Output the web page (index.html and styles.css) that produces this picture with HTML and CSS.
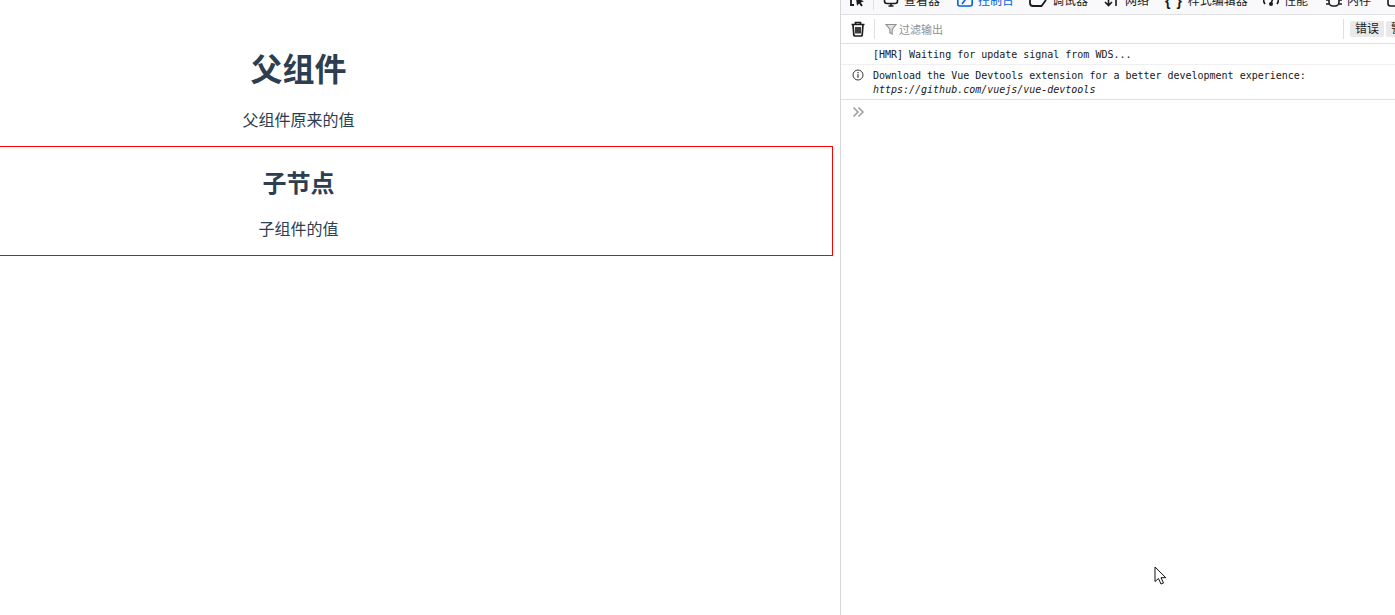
FILE: index.html
```html
<!DOCTYPE html>
<html lang="zh">
<head>
<meta charset="utf-8">
<title>Vue</title>
<link rel="stylesheet" href="styles.css">
</head>
<body>
<div class="layout">
  <main class="page">
    <div class="app">
      <h1 class="title">父组件</h1>
      <p class="text parent-text">父组件原来的值</p>
      <section class="child">
        <h2 class="subtitle">子节点</h2>
        <p class="text child-text">子组件的值</p>
      </section>
    </div>
  </main>
  <aside class="devtools">
    <nav class="tabs">
      <svg class="tab-icon pick" viewBox="0 0 16 16" width="16" height="16"><path d="M2 5v8h3M2 5h8" fill="none" stroke="#1b1b1d" stroke-width="1.800"/><path d="M7 6l8 3.200-3.200 1.200 2 3-1.600 1.100-2-3-2.200 2.200z" fill="#1b1b1d"/></svg>
      <span class="sep"></span>
      <span class="tab t1"><svg class="tab-icon" viewBox="0 0 16 16" width="16" height="16"><rect x="1.500" y="0" width="13" height="11.500" rx="2.500" fill="none" stroke="#1b1b1d" stroke-width="1.600"/><path d="M8 11.500v2.500M5.500 14h5" stroke="#1b1b1d" stroke-width="1.600"/></svg>查看器</span>
      <span class="tab t2 active"><svg class="tab-icon" viewBox="0 0 16 16" width="16" height="16"><rect x="0.800" y="-2" width="14.400" height="16" rx="2" fill="none" stroke="#0060df" stroke-width="1.600"/><path d="M5 12l6-8" stroke="#0060df" stroke-width="1.600"/></svg>控制台</span>
      <span class="tab t3"><svg class="tab-icon" viewBox="0 0 18 16" width="18" height="16"><path d="M1 6v5a3 3 0 0 0 3 3h8.500l4.500-6" fill="none" stroke="#1b1b1d" stroke-width="1.800"/></svg>调试器</span>
      <span class="tab t4"><svg class="tab-icon" viewBox="0 0 16 16" width="16" height="16"><path d="M4.500 -2v15M1 10l3.500 3.500L8 10M12 14V-2" fill="none" stroke="#1b1b1d" stroke-width="1.600"/></svg>网络</span>
      <span class="tab t5"><span class="braces">{ }</span>样式编辑器</span>
      <span class="tab t6"><svg class="tab-icon" viewBox="0 0 16 16" width="16" height="16"><path d="M2 12a7 7 0 0 1 0-8M14 12a7 7 0 0 0 0-8" fill="none" stroke="#1b1b1d" stroke-width="1.600"/><circle cx="8" cy="12" r="2" fill="#1b1b1d"/><path d="M8 12l2-6" stroke="#1b1b1d" stroke-width="1.600"/></svg>性能</span>
      <span class="tab t7"><svg class="tab-icon" viewBox="0 0 16 16" width="16" height="16"><rect x="3" y="2" width="10" height="12" rx="4" fill="none" stroke="#1b1b1d" stroke-width="1.600"/><path d="M0 8h3M13 8h3M0 12h3M13 12h3" stroke="#1b1b1d" stroke-width="1.600"/></svg>内存</span>
      <svg class="tab-icon" viewBox="0 0 16 16" width="16" height="16"><rect x="1" y="-3" width="14" height="17" rx="2.500" fill="none" stroke="#1b1b1d" stroke-width="1.600"/></svg>
    </nav>
    <div class="toolbar">
      <svg class="trash" viewBox="0 0 16 16" width="16" height="16"><path d="M1.500 3.500h13M5.500 3V1.500h5V3M3 3.500l.8 10.500a1.200 1.200 0 0 0 1.200 1h6a1.200 1.200 0 0 0 1.200-1L13 3.500M6 6v6.500M8 6v6.500M10 6v6.500" fill="none" stroke="#1b1b1d" stroke-width="1.700"/></svg>
      <span class="sep tall"></span>
      <svg class="funnel" viewBox="0 0 12 12" width="12" height="12"><path d="M1 1.500h10L7.200 6.200V11L4.800 9.600V6.200z" fill="#e3e3e5" stroke="#8f8f94" stroke-width="1.100"/></svg>
      <span class="filter">过滤输出</span>
      <span class="sep tall right"></span>
      <span class="chip">错误</span>
      <span class="chip">警告</span>
    </div>
    <div class="log first">[HMR] Waiting for update signal from WDS...</div>
    <div class="log info">
      <svg class="info-icon" viewBox="0 0 12 12" width="12" height="12"><circle cx="6" cy="6" r="5" fill="none" stroke="#38383d" stroke-width="1"/><path d="M6 5.200v3.600M6 3v1.200" stroke="#38383d" stroke-width="1.200"/></svg>
      <div>Download the Vue Devtools extension for a better development experience:<br><em>https://github.com/vuejs/vue-devtools</em></div>
    </div>
    <div class="prompt">
      <svg viewBox="0 0 12 12" width="12" height="12"><path d="M1.500 1.500L6 6l-4.500 4.500M6.500 1.500L11 6l-4.500 4.500" fill="none" stroke="#9a9aa0" stroke-width="1.500"/></svg>
    </div>
    <svg class="cursor" viewBox="0 0 14 20" width="14" height="20"><path d="M1 1v14.500l3.500-3 2.500 5.500 2.500-1-2.500-5.300h4.800z" fill="#fff" stroke="#111" stroke-width="1"/></svg>
  </aside>
</div>
</body>
</html>
```
FILE: styles.css
```css
* { box-sizing: border-box; }
html, body { margin: 0; padding: 0; height: 100%; background: #fff; overflow: hidden; }
.layout { display: grid; grid-template-columns: 840px 1fr; height: 615px; }
.page { overflow: hidden; }
.app {
  width: 1069px;
  margin-left: -236px;
  text-align: center;
  color: #2c3e50;
  font-family: "Liberation Sans", "Noto Sans CJK SC", sans-serif;
}
.title { margin: 0; padding-top: 49px; font-size: 32px; line-height: 42px; font-weight: 700; }
.text { margin: 0; font-size: 16px; line-height: 22px; }
.parent-text { margin-top: 19px; }
.child { margin-top: 14px; height: 110px; border: 1px solid #f00; }
.subtitle { margin: 0; padding-top: 21px; font-size: 24px; line-height: 32px; font-weight: 700; }
.child-text { margin-top: 19px; }
.devtools {
  position: relative;
  border-left: 1px solid #d7d7db;
  font-family: "Liberation Sans", "Noto Sans CJK SC", sans-serif;
  overflow: hidden;
}
.tabs {
  display: flex;
  align-items: flex-start;
  height: 15px;
  padding: 0 0 0 8px;
  background: #f9f9fb;
  border-bottom: 1px solid #e0e0e2;
  overflow: hidden;
  white-space: nowrap;
  font-size: 12px;
  line-height: 14px;
  color: #1b1b1d;
}
.tab { display: flex; align-items: flex-start; gap: 5px; flex: none; height: 14px; margin-top: -6px; }
.tab-icon { flex: none; display: block; }
.tab .tab-icon { margin-top: -2px; }
.tabs > .tab-icon { margin-top: -8px; }
.sep { flex: none; width: 1px; height: 10px; background: #e0e0e2; margin: 0 9px 0 8px; }
.t1 { margin-right: 17px; }
.t2 { margin-right: 15px; color: #0060df; }
.t3 { margin-right: 16px; }
.t4 { margin-right: 16px; }
.t5 { margin-right: 15px; }
.t6 { margin-right: 18px; }
.t7 { margin-right: 16px; }
.braces { font-size: 14px; font-weight: 700; letter-spacing: 1px; }
.toolbar {
  display: flex;
  align-items: center;
  height: 29px;
  padding-left: 9px;
  border-bottom: 1px solid #e0e0e2;
  background: #fff;
  white-space: nowrap;
  overflow: hidden;
}
.sep.tall { height: 20px; margin: 0 10px 0 8px; }
.sep.right { margin: 0 6px 0 0; }
.filter { flex: 0 0 446px; margin-left: 2px; margin-right: -2px; font-size: 11px; color: #8f8f94; }
.funnel { flex: none; }
.trash { flex: none; }
.chip {
  flex: none;
  width: 34px;
  margin-right: 2px;
  height: 16px;
  border-radius: 2px;
  background: #e9e9eb;
  color: #1b1b1d;
  font-size: 12px;
  line-height: 16px;
  text-align: center;
}
.log {
  font-family: "DejaVu Sans Mono", monospace;
  font-size: 10px;
  line-height: 14px;
  letter-spacing: -0.01px;
  color: #18181a;
  padding-left: 32px;
  white-space: nowrap;
}
.first { height: 21px; padding-top: 4px; border-bottom: 1px solid #f0f0f2; }
.info { position: relative; height: 35px; padding-top: 4px; border-bottom: 1px solid #e0e0e2; }
.info-icon { position: absolute; left: 11px; top: 4px; }
.prompt { padding: 6px 0 0 11px; }
.prompt svg { display: block; }
.cursor { position: absolute; left: 313px; top: 566px; }
```
